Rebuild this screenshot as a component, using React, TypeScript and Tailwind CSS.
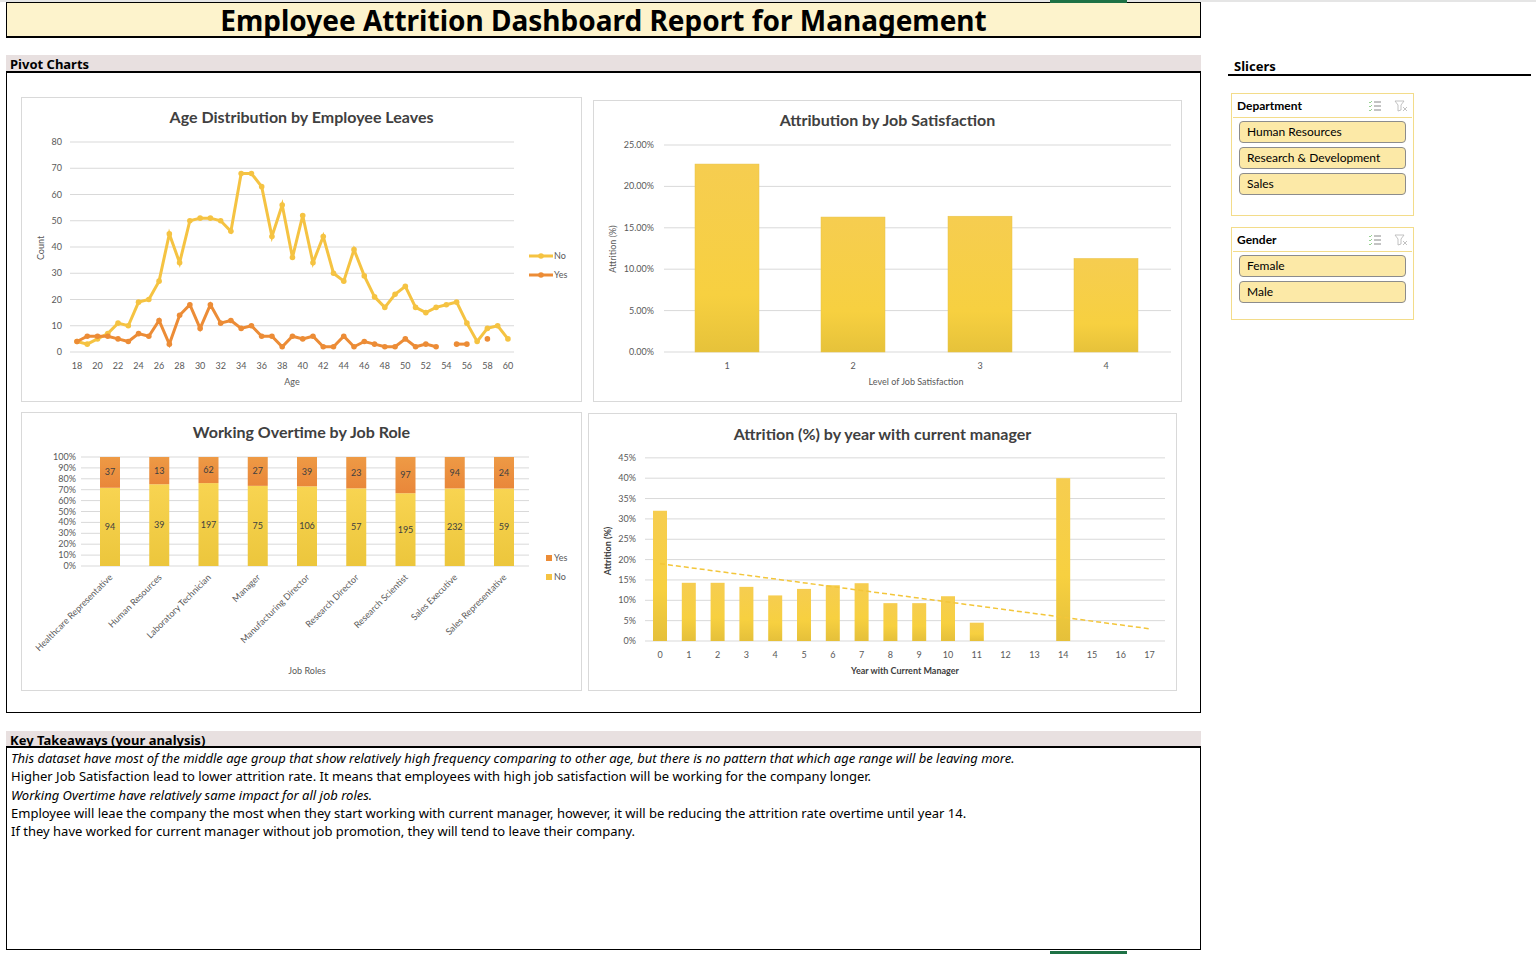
import React from "react";

const F = "[font-family:Lato,sans-serif]";
const AX = "#595959";
const GRID = "#d9d9d9";

const no = [4,3,5,7,11,10,19,20,27,45,34,50,51,51,50,46,68,68,63,44,56,36,52,34,44,30,27,39,29,21,17,22,25,17,15,17,18,19,11,4,9,10,5];
const yes: (number | null)[] = [4,6,6,6,5,4,7,6,12,3,14,18,9,18,11,12,9,10,6,6,2,6,5,6,2,2,6,2,4,3,2,2,5,2,3,2,null,3,3,null,5,null,null];

const Card = ({ title, ty, children, className }: { title: string; ty: number; children: React.ReactNode; className: string }) => (
  <div className={`absolute bg-white border border-[#d9d9d9] ${className}`}>
    <svg width="100%" height="100%" className="block">
      <text x="50%" y={ty} textAnchor="middle" fontSize="16" fontWeight="700" fill="#404040" fontFamily="Lato, sans-serif">{title}</text>
      {children}
    </svg>
  </div>
);

const AgeChart = () => {
  const X = (i: number) => 55 + i * 10.26;
  const Y = (v: number) => 254 - v * 2.625;
  const noPath = no.map((v, i) => `${i ? "L" : "M"}${X(i)},${Y(v)}`).join(" ");
  const segs: string[] = [];
  let cur = "";
  yes.forEach((v, i) => {
    if (v === null) { if (cur) segs.push(cur); cur = ""; }
    else cur += `${cur ? "L" : "M"}${X(i)},${Y(v)} `;
  });
  if (cur) segs.push(cur);
  return (
    <Card title="Age Distribution by Employee Leaves" ty={25} className="left-[21px] top-[97px] w-[561px] h-[305px]">
      <g fontFamily="Lato, sans-serif" fontSize="9" fill={AX}>
        {[0,10,20,30,40,50,60,70,80].map(v => (
          <g key={v}>
            <line x1="48" x2="492" y1={Y(v)} y2={Y(v)} stroke={GRID} />
            <text x="40" y={Y(v) + 3} textAnchor="end">{v}</text>
          </g>
        ))}
        {Array.from({ length: 22 }, (_, k) => <text key={k} x={X(k * 2)} y="271" textAnchor="middle">{18 + k * 2}</text>)}
        <text x="270" y="287" textAnchor="middle">Age</text>
        <text transform="translate(22,150) rotate(-90)" textAnchor="middle">Count</text>
      </g>
      <path d={noPath} fill="none" stroke="#f5c342" strokeWidth="3" />
      {no.map((v, i) => <circle key={i} cx={X(i)} cy={Y(v)} r="2.8" fill="#f5c342" />)}
      {segs.map((d, i) => <path key={i} d={d} fill="none" stroke="#ec8c36" strokeWidth="3" />)}
      {yes.map((v, i) => v !== null && <circle key={i} cx={X(i)} cy={Y(v)} r="2.8" fill="#ec8c36" />)}
      <g fontFamily="Lato, sans-serif" fontSize="9" fill={AX}>
        <line x1="507" x2="531" y1="158" y2="158" stroke="#f5c342" strokeWidth="3" /><circle cx="519" cy="158" r="2.8" fill="#f5c342" />
        <text x="532" y="161">No</text>
        <line x1="507" x2="531" y1="177" y2="177" stroke="#ec8c36" strokeWidth="3" /><circle cx="519" cy="177" r="2.8" fill="#ec8c36" />
        <text x="532" y="180">Yes</text>
      </g>
    </Card>
  );
};

const SatChart = () => {
  const Y = (v: number) => 251 - v * 8.28;
  const vals = [22.7, 16.3, 16.4, 11.3];
  const cx = [133, 259, 386, 512];
  return (
    <Card title="Attribution by Job Satisfaction" ty={25} className="left-[593px] top-[100px] w-[589px] h-[302px]">
      <defs>
        <linearGradient id="gb" x1="0" y1="0" x2="0" y2="1">
          <stop offset="0" stopColor="#f6cd50" /><stop offset="0.7" stopColor="#f7d040" /><stop offset="1" stopColor="#e6c23a" />
        </linearGradient>
      </defs>
      <g fontFamily="Lato, sans-serif" fontSize="9" fill={AX}>
        {[0,5,10,15,20,25].map(v => (
          <g key={v}>
            <line x1="70" x2="577" y1={Y(v)} y2={Y(v)} stroke={GRID} />
            <text x="60" y={Y(v) + 3} textAnchor="end">{v.toFixed(2)}%</text>
          </g>
        ))}
        {vals.map((v, i) => (
          <g key={i}>
            <rect x={cx[i] - 32} y={Y(v)} width="64" height={251 - Y(v)} fill="url(#gb)" stroke="#e8c24a" strokeWidth="0.5" />
            <text x={cx[i]} y="268" textAnchor="middle">{i + 1}</text>
          </g>
        ))}
        <text x="322" y="284" textAnchor="middle">Level of Job Satisfaction</text>
        <text transform="translate(22,148) rotate(-90)" textAnchor="middle">Attrition (%)</text>
      </g>
    </Card>
  );
};

const roles = [
  ["Healthcare Representative", 94, 37], ["Human Resources", 39, 13], ["Laboratory Technician", 197, 62],
  ["Manager", 75, 27], ["Manufacturing Director", 106, 39], ["Research Director", 57, 23],
  ["Research Scientist", 195, 97], ["Sales Executive", 232, 94], ["Sales Representative", 59, 24],
] as const;

const OtChart = () => {
  const Y = (p: number) => 153 - p * 1.09;
  return (
    <Card title="Working Overtime by Job Role" ty={25} className="left-[21px] top-[412px] w-[561px] h-[279px]">
      <defs>
        <linearGradient id="gy" x1="0" y1="0" x2="0" y2="1">
          <stop offset="0" stopColor="#f8d451" /><stop offset="1" stopColor="#ecc63c" />
        </linearGradient>
        <linearGradient id="go" x1="0" y1="0" x2="0" y2="1">
          <stop offset="0" stopColor="#ee9a45" /><stop offset="1" stopColor="#e9873a" />
        </linearGradient>
      </defs>
      <g fontFamily="Lato, sans-serif" fontSize="9" fill={AX}>
        {[0,10,20,30,40,50,60,70,80,90,100].map(v => (
          <g key={v}>
            <line x1="59" x2="507" y1={Y(v)} y2={Y(v)} stroke={GRID} />
            <text x="54" y={Y(v) + 3} textAnchor="end">{v}%</text>
          </g>
        ))}
        {roles.map(([n, a, b], i) => {
          const cx = 88 + i * 49.25;
          const p = (a / (a + b)) * 100;
          return (
            <g key={n}>
              <rect x={cx - 10} y={Y(p)} width="20" height={153 - Y(p)} fill="url(#gy)" />
              <rect x={cx - 10} y={Y(100)} width="20" height={Y(p) - Y(100)} fill="url(#go)" />
              <text x={cx} y={Y(p / 2) + 3} textAnchor="middle" fill="#404040">{a}</text>
              <text x={cx} y={Y((100 + p) / 2) + 3} textAnchor="middle" fill="#404040">{b}</text>
              <text transform={`translate(${cx + 3},165) rotate(-45)`} textAnchor="end" fontSize="9">{n}</text>
            </g>
          );
        })}
        <text x="285" y="261" textAnchor="middle">Job Roles</text>
        <rect x="524" y="142" width="6" height="6" fill="#ec8c36" /><text x="532" y="148">Yes</text>
        <rect x="524" y="161" width="6" height="6" fill="#f5c342" /><text x="532" y="167">No</text>
      </g>
    </Card>
  );
};

const mgr = [32, 14.3, 14.3, 13.3, 11.2, 12.8, 13.7, 14.2, 9.3, 9.3, 11, 4.5, 0, 0, 40, 0, 0, 0];

const MgrChart = () => {
  const Y = (v: number) => 227 - v * 4.07;
  const X = (i: number) => 71 + i * 28.8;
  return (
    <Card title="Attrition (%) by year with current manager" ty={26} className="left-[588px] top-[413px] w-[589px] h-[278px]">
      <defs>
        <linearGradient id="gm" x1="0" y1="0" x2="0" y2="1">
          <stop offset="0" stopColor="#f6cd50" /><stop offset="0.6" stopColor="#f7d040" /><stop offset="1" stopColor="#e5c03a" />
        </linearGradient>
      </defs>
      <g fontFamily="Lato, sans-serif" fontSize="9" fill={AX}>
        {[0,5,10,15,20,25,30,35,40,45].map(v => (
          <g key={v}>
            <line x1="56" x2="576" y1={Y(v)} y2={Y(v)} stroke={GRID} />
            <text x="47" y={Y(v) + 3} textAnchor="end">{v}%</text>
          </g>
        ))}
        {mgr.map((v, i) => (
          <g key={i}>
            {v > 0 && <rect x={X(i) - 7} y={Y(v)} width="14" height={227 - Y(v)} fill="url(#gm)" />}
            <text x={X(i)} y="244" textAnchor="middle">{i}</text>
          </g>
        ))}
        <line x1={X(0)} y1={Y(19)} x2={X(17)} y2={Y(3)} stroke="#f3c63b" strokeWidth="1.5" strokeDasharray="5 3" />
        <text x="316" y="260" textAnchor="middle" fontWeight="700" fill="#404040">Year with Current Manager</text>
        <text transform="translate(22,137) rotate(-90)" textAnchor="middle" fontWeight="700" fill="#404040">Attrition (%)</text>
      </g>
    </Card>
  );
};

const SlicerIcons = () => (
  <div className="flex items-center gap-3">
    <svg width="14" height="12" viewBox="0 0 14 12">
      <path d="M1 2l1 1 2-2M1 6l1 1 2-2M1 10l1 1 2-2" stroke="#7cc576" fill="none" strokeWidth="0.8" />
      <path d="M6 2h7M6 6h7M6 10h7" stroke="#888" strokeWidth="1" />
    </svg>
    <svg width="14" height="12" viewBox="0 0 14 12">
      <path d="M1 1h9L7 5v5L4 11V5z" fill="none" stroke="#bbb" strokeWidth="0.9" />
      <path d="M9 7l4 4M13 7l-4 4" stroke="#bbb" strokeWidth="0.9" />
    </svg>
  </div>
);

const Slicer = ({ title, items, h }: { title: string; items: string[]; h: string }) => (
  <div className={`border border-[#f3dc8a] w-[183px] ${h} ${F}`}>
    <div className="flex items-center justify-between px-[4px] h-[24px] border-b border-[#f3dc8a] mx-[1px]">
      <span className="text-[12px] font-bold text-black">{title}</span>
      <SlicerIcons />
    </div>
    <div className="flex flex-col gap-[4px] px-[7px] pt-[3px]">
      {items.map(t => (
        <div key={t} className="h-[22px] rounded-[4px] border border-[#8c8c8c] bg-[#fce9a7] px-[7px] flex items-center text-[12px] text-black">{t}</div>
      ))}
    </div>
  </div>
);

export default function App() {
  const S = "[font-family:'Liberation_Sans',Arial,sans-serif]";
  return (
    <div className={`w-[1536px] h-[954px] bg-white relative overflow-hidden ${S}`}>
      <div className="h-[2px] w-full bg-[#e5e5e5]" />
      <div className="absolute left-[1050px] top-0 w-[77px] h-[3px] bg-[#1e7145]" />
      <div className="absolute left-[1050px] bottom-0 w-[77px] h-[3px] bg-[#1e7145]" />
      <div className="flex">
        <div className="w-[1201px] pl-[6px]">
          <div className="h-[36px] bg-[#fdf3cc] border border-black border-b-2 flex items-center justify-center text-[28px] font-bold text-black">
            Employee Attrition Dashboard Report for Management
          </div>
          <div className="h-[17px]" />
          <div className="h-[18px] bg-[#e8e0e0] border-b-2 border-black text-[13px] font-bold pl-[4px] leading-[18px] text-black">Pivot Charts</div>
          <div className="h-[640px] border border-black border-t-0 relative" />
          <div className="h-[18px]" />
          <div className="h-[17px] bg-[#e8e0e0] border-b-2 border-black text-[13px] font-bold pl-[4px] leading-[18px] text-black">Key Takeaways (your analysis)</div>
          <div className="h-[202px] border border-black border-t-0 px-[4px] pt-[1px] text-[13px] leading-[18.3px] text-black">
            <p className="italic">This dataset have most of the middle age group that show relatively high frequency comparing to other age, but there is no pattern that which age range will be leaving more.</p>
            <p>Higher Job Satisfaction lead to lower attrition rate. It means that employees with high job satisfaction will be working for the company longer.</p>
            <p className="italic">Working Overtime have relatively same impact for all job roles.</p>
            <p>Employee will leae the company the most when they start working with current manager, however, it will be reducing the attrition rate overtime until year 14.</p>
            <p>If they have worked for current manager without job promotion, they will tend to leave their company.</p>
          </div>
        </div>
        <div className="pl-[27px] pt-[56px] w-[330px]">
          <div className="text-[13px] font-bold border-b-2 border-black pl-[6px] leading-[16px] text-black">Slicers</div>
          <div className="pl-[3px] pt-[17px] flex flex-col gap-[11px]">
            <Slicer title="Department" items={["Human Resources", "Research & Development", "Sales"]} h="h-[123px]" />
            <Slicer title="Gender" items={["Female", "Male"]} h="h-[93px]" />
          </div>
        </div>
      </div>
      <AgeChart />
      <SatChart />
      <OtChart />
      <MgrChart />
    </div>
  );
}
